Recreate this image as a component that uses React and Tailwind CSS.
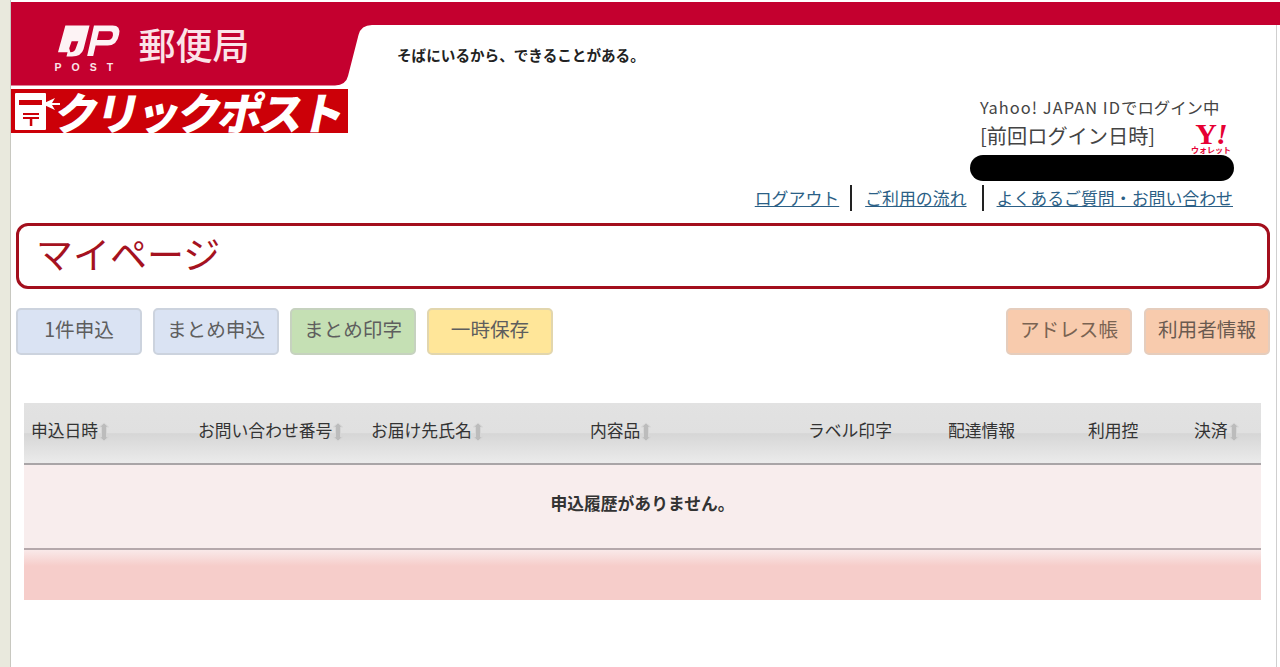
const font = { fontFamily: '"Noto Sans CJK JP", "Noto Sans", sans-serif' };

function Banner() {
  return (
    <svg viewBox="11 0 1269 88" className="block w-[1269px] h-[88px] shrink-0">
      <path d="M11 2H1280V25H372Q361 25 358.500 35L348 76Q346 85 335 85.500H11Z" fill="#c4002f" />
      <rect x="1276" y="25" width="1" height="63" fill="#cfcfcf" />
      <g transform="translate(58 25.500) scale(1.1) translate(-58.300 -27.300)">
        <path d="M65 27.300H87L81.500 49Q79.500 55.500 71 55.500H66L67 51.700H58.300Z" fill="#fdf3f5" />
        <path d="M70.700 41.700H76.800L74.500 48Q73.500 51.500 69.500 51.700L68.500 48Z" fill="#c4002f" />
        <path d="M91 27.300H108Q115.500 27.300 113.800 35.500Q112 45.500 103.500 45.500H92.500L90.300 55H84.800Z" fill="#fdf3f5" />
        <path d="M95.500 32.500L93.700 40.500H104Q107.500 40.500 108.200 36.500Q108.800 32.500 105.500 32.500Z" fill="#c4002f" />
      </g>
      <text x="54.500" y="71" fill="#fbe3e8" fontSize="10.500" fontWeight="700" letterSpacing="10" fontFamily="Liberation Sans, sans-serif">POST</text>
      <text x="138.500" y="60" fill="#fbe3e8" fontSize="37" fontWeight="500" style={font}>郵便局</text>
      <text x="397" y="61" fill="#222" fontSize="14.600" fontWeight="700" style={font}>そばにいるから、できることがある。</text>
    </svg>
  );
}

function ClickPostLogo() {
  return (
    <div className="w-[337px] h-[44px] mt-[1px] bg-[#cc0008] flex items-center">
      <span
        className="order-2 text-white font-black text-[44px] leading-[44px] whitespace-nowrap -skew-x-12 tracking-[-3px] ml-[-3px]"
        style={font}
      >
        クリックポスト
      </span>
      <svg viewBox="0 0 48 44" className="order-1 w-[48px] h-[44px] shrink-0 overflow-visible relative z-10">
        <rect x="4" y="4" width="31" height="37" rx="1" fill="#fff" />
        <rect x="8" y="11" width="23" height="5" fill="#cc0008" />
        <rect x="12" y="24" width="16" height="2" fill="#cc0008" />
        <rect x="12" y="28" width="16" height="2" fill="#cc0008" />
        <rect x="18.800" y="28" width="2.500" height="9" fill="#cc0008" />
        <path d="M31 15L44 9L41 14H49V16H41L44 21Z" fill="#fff" />
      </svg>
    </div>
  );
}

function SortIcon() {
  return (
    <svg viewBox="0 0 12 20" className="w-[12px] h-[20px] shrink-0 mt-[3px]">
      <path d="M6 1L10.500 5H8.500V15H10.500L6 19L1.500 15H3.500V5H1.500Z" fill="#bcbcbc" stroke="#d6d6d6" strokeWidth="1" />
    </svg>
  );
}

function Btn({ label, cls }) {
  return (
    <div className={`w-[126px] h-[47px] rounded-[5px] border-2 flex items-center justify-center pb-[5px] text-[19.600px] text-[#5e5e5e] ${cls}`}>
      {label}
    </div>
  );
}

const columns = [
  ['申込日時', true],
  ['お問い合わせ番号', true],
  ['お届け先氏名', true],
  ['内容品', true],
  ['ラベル印字', false],
  ['配達情報', false],
  ['利用控', false],
  ['決済', true],
];

export default function App() {
  return (
    <div className="flex w-[1280px] h-[667px] bg-white overflow-hidden text-[#333]" style={font}>
      <div className="w-[11px] shrink-0 bg-[#e9e9dd] border-r border-[#c8c8c0]" />
      <div className="flex-1 flex flex-col min-w-0">
        <Banner />
        <div className="flex flex-1 min-h-0">
          <div className="w-[1265px] shrink-0 flex flex-col">
            <div className="h-[135px] flex flex-col">
              <div className="flex justify-between items-start">
                <ClickPostLogo />
                <div className="w-[264px] mr-[42px] flex flex-col">
                  <div className="pl-[10px] pt-[7px] text-[16.400px] leading-[24px] text-[#444] whitespace-nowrap">
                    <span className="tracking-[1.05px]">Yahoo! JAPAN ID</span>でログイン中
                  </div>
                  <div className="flex justify-between pl-[10px] pr-[3px] mt-[4px] h-[32px]">
                    <span className="text-[20.200px] leading-[26px] text-[#444] whitespace-nowrap">[前回ログイン日時]</span>
                    <div className="flex flex-col items-center w-[40px]">
                      <span className="text-[#e60033] font-bold text-[30px] leading-[22px] tracking-[-1px]" style={{ fontFamily: '"Liberation Serif", serif' }}>
                        Y<span className="italic">!</span>
                      </span>
                      <span className="text-[#e60033] font-bold text-[8px] leading-[9px] whitespace-nowrap">ウォレット</span>
                    </div>
                  </div>
                  <div className="h-[26px] bg-black rounded-full" />
                </div>
              </div>
              <div className="flex justify-end items-center mr-[43px] mt-[4px] h-[26px] text-[16.900px] text-[#2b5f86] whitespace-nowrap">
                <span className="underline">ログアウト</span>
                <div className="w-[2px] h-[26px] bg-[#222] ml-[11px] mr-[13px]" />
                <span className="underline">ご利用の流れ</span>
                <div className="w-[2px] h-[26px] bg-[#222] ml-[15px] mr-[13px]" />
                <span className="underline">よくあるご質問・お問い合わせ</span>
              </div>
            </div>

            <div className="ml-[5px] mr-[6px] h-[66px] border-[3px] border-[#a30f1d] rounded-[12px] flex items-center pl-[17px] pb-[4px] text-[37px] text-[#a5121f]">
              マイページ
            </div>

            <div className="ml-[5px] mr-[6px] mt-[19px] flex justify-between">
              <div className="flex gap-[11px]">
                <Btn label="1件申込" cls="bg-[#dae3f3] border-[#ccd3de]" />
                <Btn label="まとめ申込" cls="bg-[#dae3f3] border-[#ccd3de]" />
                <Btn label="まとめ印字" cls="bg-[#c5e0b4] border-[#c6d2bf]" />
                <Btn label="一時保存" cls="bg-[#ffe699] border-[#e2d6ad]" />
              </div>
              <div className="flex gap-[12px]">
                <Btn label="アドレス帳" cls="bg-[#f8cbad] border-[#e5cdbd] !text-[#7a6352]" />
                <Btn label="利用者情報" cls="bg-[#f8cbad] border-[#e5cdbd] !text-[#6a5a50]" />
              </div>
            </div>

            <div className="ml-[13px] mt-[48px] w-[1237px] flex flex-col">
              <div className="h-[62px] pb-[5px] grid grid-cols-[167px_173px_219px_218px_140px_140px_106px_74px] items-center border-b-2 border-[#a9a5a7] bg-[linear-gradient(#e2e2e2_0%,#e0e0e0_50%,#d6d6d6_51%,#ebebeb_100%)] text-[16.800px] text-[#333]">
                {columns.map(([name, sortable]) => (
                  <div key={name} className="pl-[7px] flex items-center whitespace-nowrap">
                    {name}
                    {sortable && <SortIcon />}
                  </div>
                ))}
              </div>
              <div className="h-[85px] pb-[6px] bg-[#f8eded] border-b-2 border-[#b5a8ab] flex items-center justify-center font-bold text-[16.800px] text-[#333]">
                申込履歴がありません。
              </div>
              <div className="h-[50px] bg-[linear-gradient(#f9e9e9_0%,#f6cdca_32%,#f6cdca_100%)]" />
            </div>
          </div>
          <div className="w-[4px] shrink-0 border-l border-[#cfcfcf]" />
        </div>
      </div>
    </div>
  );
}
